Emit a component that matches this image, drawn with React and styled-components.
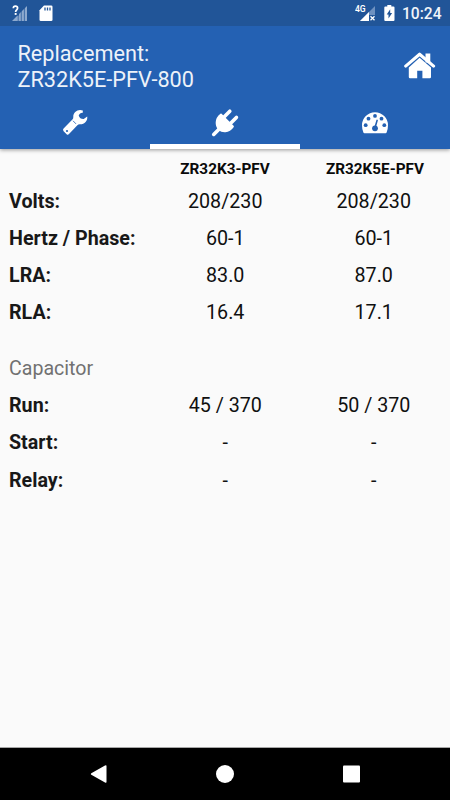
import React from "react";
import styled, { createGlobalStyle } from "styled-components";

const GlobalStyle = createGlobalStyle`
  *, *::before, *::after { box-sizing: border-box; }
  html, body { margin: 0; padding: 0; }
  body { font-family: Roboto, "Noto Sans", sans-serif; background: #fafafa; overflow: hidden; }
`;

const Screen = styled.div`
  display: flex;
  flex-direction: column;
  width: 450px;
  height: 800px;
  background: #fafafa;
`;

const StatusBar = styled.div`
  position: relative;
  z-index: 1;
  display: flex;
  justify-content: space-between;
  align-items: center;
  flex: none;
  height: 26px;
  padding: 0 9px 0 12px;
  background: #215598;
  color: #fff;
`;

const StatusGroup = styled.div`
  display: flex;
  align-items: center;
  gap: ${(p) => p.$gap || 0}px;
  height: 26px;
`;

const Clock = styled.span`
  width: 39px;
  margin-left: 7px;
  font-size: 15.6px;
  font-weight: 500;
  line-height: 26px;
  padding-top: 2px;
  white-space: nowrap;
  color: #f1f5fa;
`;

const Header = styled.header`
  display: flex;
  flex-direction: column;
  flex: none;
  height: 123px;
  background: #2461b3;
  box-shadow: 0 1px 4px rgba(0, 0, 0, 0.4);
`;

const TitleBar = styled.div`
  display: flex;
  justify-content: space-between;
  height: 74px;
  padding: 15px 14px 0 17.5px;
`;

const Title = styled.h1`
  margin: 0;
  font-size: 21.7px;
  font-weight: 400;
  line-height: 25.5px;
  color: #edf2f9;
  white-space: pre-line;
`;

const HomeButton = styled.button`
  width: 32px;
  height: 28px;
  margin-top: 11px;
  padding: 0;
  border: 0;
  background: none;
`;

const Tabs = styled.nav`
  display: grid;
  grid-template-columns: repeat(3, 150px);
  height: 49px;
`;

const Tab = styled.button`
  display: flex;
  justify-content: center;
  padding: 8px 0 0;
  border: 0;
  border-bottom: 5px solid ${(p) => (p.$active ? "#fff" : "transparent")};
  background: none;
`;

const Icon = styled.svg`
  display: block;
  flex: none;
`;

const Content = styled.main`
  flex: 1;
  padding-top: 8px;
`;

const Row = styled.div`
  display: grid;
  grid-template-columns: 142px 148.5px 148.5px;
  align-items: center;
  height: 37.25px;
  margin-left: 9px;
`;

const ColumnTitles = styled.div`
  display: grid;
  grid-template-columns: 150px 150px;
  align-items: center;
  height: 23px;
  margin: 0 0 2.6px 150px;
`;

const ColumnTitle = styled.div`
  font-size: 15.3px;
  font-weight: 700;
  text-align: center;
  color: #0a0a0a;
`;

const Label = styled.div`
  font-size: 19.7px;
  font-weight: 700;
  color: #181818;
  white-space: nowrap;
`;

const Value = styled.div`
  font-size: 19.7px;
  text-align: center;
  color: #101010;
  white-space: nowrap;
`;

const SectionTitle = styled.h2`
  margin: 18px 0 0 9px;
  height: 37.3px;
  font-size: 19.6px;
  font-weight: 400;
  line-height: 37.3px;
  color: #717171;
`;

const NavigationBar = styled.footer`
  display: flex;
  justify-content: space-between;
  align-items: flex-start;
  flex: none;
  height: 53px;
  padding: 17px 90px 0 90px;
  border-top: 1px solid #a6a6a6;
  background: #000;
`;

const SignalUnknown = () => (
  <Icon width="16" height="18" viewBox="0 0 16 18">
    <path d="M15 2V17H0Z" fill="#8da9ce" />
    <path d="M6.2 9v8M9.3 6v11M12.4 3v14" stroke="#215598" strokeWidth=".7" />
    <path d="M0 0H7V11.5H0Z" fill="#215598" />
    <path d="M1.3 4.2C1.3 1.6 5.5 1.4 5.6 4.1C5.6 5.8 3.6 6 3.6 8" stroke="#fff" strokeWidth="1.7" fill="none" />
    <path d="M2.7 9h1.9v1.9H2.7Z" fill="#fff" />
  </Icon>
);

const SdCard = () => (
  <Icon width="14" height="17" viewBox="0 0 14 17">
    <path d="M5 .5H12.2Q13.5.5 13.5 1.8V14.7Q13.5 16 12.2 16H1.8Q.5 16 .5 14.7V5.2Z" fill="#fff" />
    <path d="M6 2.5v3M8.5 2.5v3M11 2.5v3" stroke="#215598" strokeWidth="1.3" />
  </Icon>
);

const MobileSignal = () => (
  <Icon width="21" height="18" viewBox="0 0 21 18" fontFamily="Roboto, sans-serif">
    <path d="M20 2V17H5Z" fill="#6e91c0" />
    <path d="M14 8V17H5Z" fill="#fff" />
    <path d="M14 11h6v6h-6Z" fill="#215598" />
    <path d="m15.5 12.2 4 4m0-4-4 4" stroke="#fff" strokeWidth="1.3" />
    <text x="0" y="7.8" fontSize="8.5" fontWeight="600" fill="#fff">4G</text>
  </Icon>
);

const Battery = () => (
  <Icon width="11" height="18" viewBox="0 0 11 18">
    <path d="M3.3 1h4v1.6H9.5Q10.5 2.6 10.5 3.6V16Q10.5 17 9.5 17H1.3Q.3 17 .3 16V3.6Q.3 2.6 1.3 2.6h2Z" fill="#fff" />
    <path d="M6.2 5.2V9h1.9L4.5 14.5v-4H2.7Z" fill="#215598" />
  </Icon>
);

const Home = () => (
  <Icon width="32" height="28" viewBox="0 0 32 28">
    <path d="M21.5 1.5h4.8v9h-4.8Z" fill="#fff" />
    <path d="M1.7 14.1 15.6 2.2 29.6 14.1" fill="none" stroke="#fff" strokeWidth="3.1" strokeLinecap="round" strokeLinejoin="round" />
    <path d="M15.6 5.7 27 15.5V25.1Q27 26.3 25.8 26.3H18.4V18.7H13.2V26.3H6Q4.8 26.3 4.8 25.1V15.5Z" fill="#fff" />
  </Icon>
);

const Wrench = () => (
  <Icon width="26" height="28" viewBox="0 0 26 28">
    <path d="M20.8 2.6C16.5.5 11 4 11.3 9Q11.4 10.6 10.4 11.6L1.6 20.6Q.4 21.9 1.6 23.2L4.6 26.2Q5.8 27.3 7 26.1L15.4 17.2Q16.2 16.3 17.8 16.3C22.4 16.5 26 12.6 25.2 8.4L21.7 11.1Q17.8 11.3 16.7 7.6Q17.7 4.5 20.8 4.7Z" fill="#fff" />
    <circle cx="5" cy="23" r="1.1" fill="#2461b3" />
    <path d="m11 12.8 3 3.1" stroke="#2461b3" strokeWidth=".8" />
  </Icon>
);

const Plug = () => (
  <Icon width="28" height="30" viewBox="0 0 28 30">
    <path d="m12.8 9.2 6-6M19.4 15.5l6-6.1M2.7 26.4l5-5" stroke="#fff" strokeWidth="3.6" strokeLinecap="round" />
    <path d="M9.4 5.8Q10 5.2 10.6 5.8L22.6 17.8Q23.3 18.5 22.6 19.3Q19.5 23.8 14.4 24.3Q10.4 24.6 7.4 21.9Q4.4 18.8 4.7 14.2Q5 9.2 9.4 5.8Z" fill="#fff" />
  </Icon>
);

const Gauge = () => (
  <Icon width="28" height="30" viewBox="0 0 28 30">
    <path d="M2.4 24.4Q1 21.4 1 17.3A13 13 0 0 1 27 17.3Q27 21.4 25.6 24.4Q25.3 25.2 24.6 25.2H3.4Q2.7 25.2 2.4 24.4Z" fill="#fff" />
    <g fill="#2461b3">
      <circle cx="4.7" cy="17.2" r="1.9" />
      <circle cx="7.5" cy="10.7" r="1.9" />
      <circle cx="14" cy="7.9" r="1.9" />
      <circle cx="20.5" cy="10.7" r="1.9" />
      <circle cx="23.3" cy="17.2" r="1.9" />
      <circle cx="14" cy="20.3" r="2.9" />
    </g>
    <path d="m14.2 19 1.9-6.6" stroke="#2461b3" strokeWidth="1.6" strokeLinecap="round" />
  </Icon>
);

const electrical = [
  ["Volts:", "208/230", "208/230"],
  ["Hertz / Phase:", "60-1", "60-1"],
  ["LRA:", "83.0", "87.0"],
  ["RLA:", "16.4", "17.1"],
];

const capacitor = [
  ["Run:", "45 / 370", "50 / 370"],
  ["Start:", "-", "-"],
  ["Relay:", "-", "-"],
];

const Rows = ({ data }) =>
  data.map(([label, original, replacement]) => (
    <Row key={label}>
      <Label>{label}</Label>
      <Value>{original}</Value>
      <Value>{replacement}</Value>
    </Row>
  ));

export default function App() {
  return (
    <Screen>
      <GlobalStyle />
      <StatusBar>
        <StatusGroup $gap={11}>
          <SignalUnknown />
          <SdCard />
        </StatusGroup>
        <StatusGroup>
          <StatusGroup $gap={8}>
            <MobileSignal />
            <Battery />
          </StatusGroup>
          <Clock>10:24</Clock>
        </StatusGroup>
      </StatusBar>
      <Header>
        <TitleBar>
          <Title>{"Replacement:\nZR32K5E-PFV-800"}</Title>
          <HomeButton aria-label="Home"><Home /></HomeButton>
        </TitleBar>
        <Tabs>
          <Tab aria-label="Mechanical"><Wrench /></Tab>
          <Tab aria-label="Electrical" $active><Plug /></Tab>
          <Tab aria-label="Performance"><Gauge /></Tab>
        </Tabs>
      </Header>
      <Content>
        <ColumnTitles>
          <ColumnTitle>ZR32K3-PFV</ColumnTitle>
          <ColumnTitle>ZR32K5E-PFV</ColumnTitle>
        </ColumnTitles>
        <Rows data={electrical} />
        <SectionTitle>Capacitor</SectionTitle>
        <Rows data={capacitor} />
      </Content>
      <NavigationBar>
        <Icon width="18" height="18" viewBox="0 0 18 18">
          <path d="M15 .6Q16.5-.3 16.5 1V17Q16.5 18.3 15 17.4L1.3 9.8Q.4 9 1.3 8.2Z" fill="#fff" />
        </Icon>
        <Icon width="18" height="18" viewBox="0 0 18 18">
          <circle cx="9" cy="9" r="9" fill="#fff" />
        </Icon>
        <Icon width="18" height="18" viewBox="0 0 18 18">
          <rect x="1" y=".5" width="17" height="17" rx="1" fill="#fff" />
        </Icon>
      </NavigationBar>
    </Screen>
  );
}
